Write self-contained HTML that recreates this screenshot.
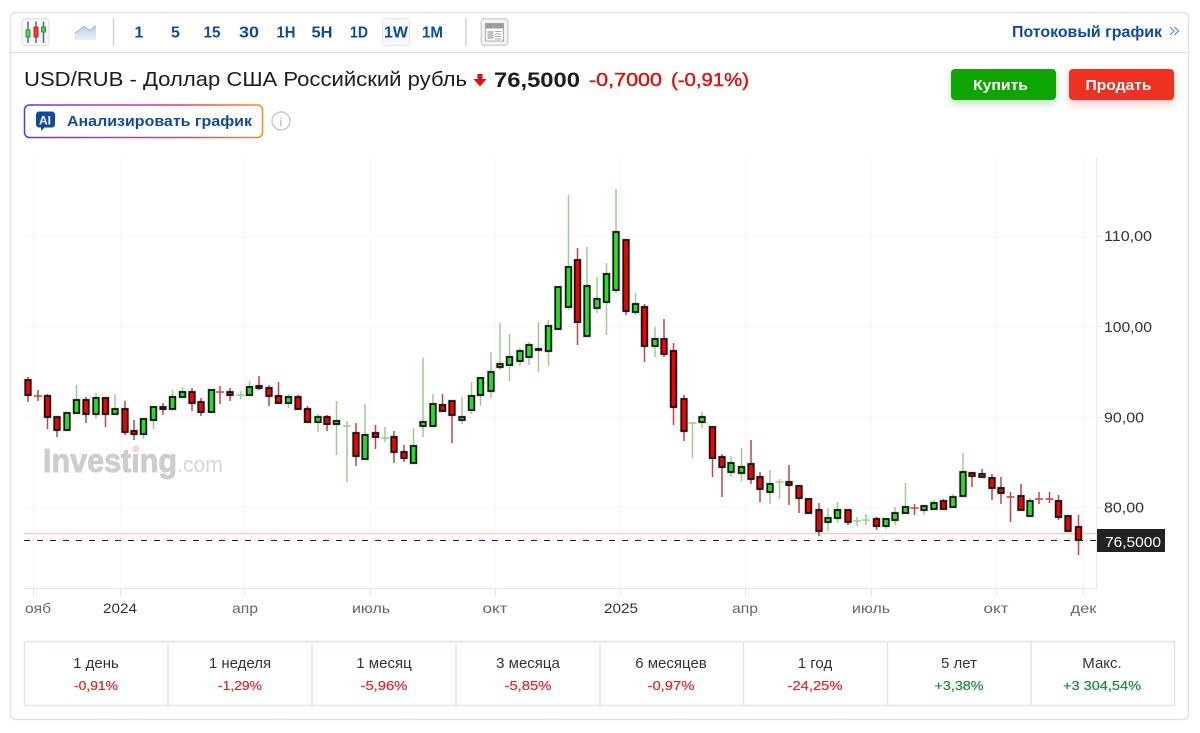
<!DOCTYPE html>
<html lang="ru"><head><meta charset="utf-8"><title>USD/RUB</title>
<style>
html,body{margin:0;padding:0;background:#fff;width:1200px;height:733px;overflow:hidden}
svg{display:block}
text{font-family:"Liberation Sans",sans-serif;}
.tb{font-size:16px;font-weight:700;fill:#124a98;text-anchor:middle}
.ax{font-size:14px;fill:#666;text-anchor:middle}
.yl{font-size:15px;fill:#333}
.lb{font-size:15px;fill:#333;text-anchor:middle}
.r{font-size:13px;fill:#e5262b;stroke:#e5262b;stroke-width:.2;text-anchor:middle}
.g{font-size:13px;fill:#1f8a3a;stroke:#1f8a3a;stroke-width:.2;text-anchor:middle}
</style></head><body>
<svg width="1200" height="733" viewBox="0 0 1200 733" xmlns="http://www.w3.org/2000/svg">
<defs>
<linearGradient id="ai" x1="0" x2="1" y1="0" y2="0"><stop offset="0" stop-color="#4a3df0"/><stop offset=".35" stop-color="#c52fc0"/><stop offset=".65" stop-color="#f8306a"/><stop offset="1" stop-color="#ff8a1c"/></linearGradient>
<linearGradient id="ar" x1="0" x2="0" y1="0" y2="1"><stop offset="0" stop-color="#bfd0e6"/><stop offset="1" stop-color="#e8eef6"/></linearGradient>
<filter id="s1" x="-20%" y="-40%" width="140%" height="200%"><feDropShadow dx="0" dy="4" stdDeviation="4" flood-color="#0ca605" flood-opacity=".28"/></filter>
<filter id="s2" x="-20%" y="-40%" width="140%" height="200%"><feDropShadow dx="0" dy="4" stdDeviation="4" flood-color="#ee3123" flood-opacity=".28"/></filter>
<path id="gb" d="M64.25 413h5.5V430h-5.5zM73.75 400h5.5V413h-5.5zM93.25 398h5.5V414h-5.5zM112.25 409h5.5V414h-5.5zM140.75 419h5.5V434h-5.5zM150.75 407h5.5V420h-5.5zM169.75 397h5.5V409h-5.5zM179.75 392h5.5V397h-5.5zM208.75 390h5.5V412h-5.5zM246.75 387h5.5V395h-5.5zM285.75 397h5.5V403h-5.5zM315.25 417h5.5V422h-5.5zM333.75 421h5.5V424h-5.5zM362.25 435h5.5V459h-5.5zM410.75 446h5.5V463h-5.5zM420.25 422h5.5V426h-5.5zM430.25 404h5.5V426h-5.5zM459.25 417h5.5V420h-5.5zM468.75 396h5.5V410h-5.5zM477.75 378h5.5V395h-5.5zM488.25 372h5.5V391h-5.5zM497.25 364h5.5V367h-5.5zM506.75 357h5.5V365h-5.5zM517.25 351h5.5V361h-5.5zM526.25 345h5.5V357h-5.5zM535.75 349h5.5V350h-5.5zM545.75 326h5.5V351h-5.5zM555.25 287h5.5V329h-5.5zM565.75 267h5.5V307h-5.5zM584.25 286h5.5V336h-5.5zM594.25 299h5.5V308h-5.5zM603.75 274h5.5V302h-5.5zM613.25 232h5.5V290h-5.5zM632.75 304h5.5V312h-5.5zM652.25 339h5.5V346h-5.5zM699.25 417h5.5V422h-5.5zM728.25 463h5.5V472h-5.5zM738.75 467h5.5V473h-5.5zM767.25 484h5.5V492h-5.5zM825.25 518h5.5V522h-5.5zM834.75 510h5.5V518h-5.5zM883.25 519h5.5V526h-5.5zM892.25 513h5.5V520h-5.5zM902.75 507h5.5V513h-5.5zM921.25 506h5.5V510h-5.5zM931.25 503h5.5V509h-5.5zM950.25 497h5.5V507h-5.5zM960.25 472h5.5V496h-5.5zM1027.25 501h5.5V516h-5.5z"/>
<path id="rb" d="M25.25 380h5.5V395h-5.5zM44.75 396h5.5V417h-5.5zM54.25 417h5.5V430h-5.5zM83.25 400h5.5V414h-5.5zM102.75 398h5.5V414h-5.5zM122.25 409h5.5V432h-5.5zM131.25 431h5.5V434h-5.5zM160.25 407h5.5V409h-5.5zM189.25 392h5.5V403h-5.5zM198.25 402h5.5V412h-5.5zM227.25 392h5.5V395h-5.5zM256.25 386h5.5V388h-5.5zM266.25 388h5.5V396h-5.5zM275.75 396h5.5V403h-5.5zM295.25 397h5.5V409h-5.5zM304.75 409h5.5V422h-5.5zM324.25 417h5.5V424h-5.5zM353.25 433h5.5V456h-5.5zM372.75 433h5.5V437h-5.5zM391.25 437h5.5V452h-5.5zM401.25 452h5.5V458h-5.5zM439.75 405h5.5V411h-5.5zM449.25 401h5.5V415h-5.5zM574.75 260h5.5V322h-5.5zM623.25 240h5.5V311h-5.5zM641.75 307h5.5V346h-5.5zM661.25 339h5.5V354h-5.5zM670.75 351h5.5V407h-5.5zM681.25 399h5.5V431h-5.5zM709.75 427h5.5V458h-5.5zM719.25 457h5.5V467h-5.5zM748.25 464h5.5V479h-5.5zM757.25 477h5.5V489h-5.5zM786.25 482h5.5V485h-5.5zM796.25 486h5.5V498h-5.5zM805.75 499h5.5V513h-5.5zM816.25 510h5.5V531h-5.5zM845.25 510h5.5V522h-5.5zM873.75 519h5.5V526h-5.5zM940.75 501h5.5V509h-5.5zM969.25 473h5.5V476h-5.5zM979.25 474h5.5V477h-5.5zM989.25 478h5.5V488h-5.5zM998.25 488h5.5V493h-5.5zM1018.25 496h5.5V510h-5.5zM1055.75 501h5.5V517h-5.5zM1065.25 516h5.5V531h-5.5zM1075.75 527h5.5V540h-5.5z"/>
</defs>

<!-- card -->
<rect x="10.5" y="12.5" width="1178" height="707" rx="5" fill="#fff" stroke="#e2e4e8" stroke-width="1.6"/>
<path d="M11 52.5H1188" stroke="#dfe1e5" stroke-width="1.4"/>

<!-- toolbar -->
<rect x="22" y="18.5" width="27" height="27" rx="3" fill="#f6f7f8" stroke="#dfe1e4" stroke-width="1.2"/>
<path d="M28 21.5V43M36 21.5V43M43.5 21.5V43" stroke="#666" stroke-width="1.5"/>
<rect x="26" y="30" width="4" height="7" fill="#4bd04b" stroke="#3a8a3a"/>
<rect x="34" y="27" width="4" height="10" fill="#f33" stroke="#a33"/>
<rect x="41.5" y="27" width="4" height="5" fill="#4bd04b" stroke="#3a8a3a"/>
<path d="M75 33L84 26.5L90 30.5L96 25.5V40H75Z" fill="url(#ar)"/>
<path d="M75 33L84 26.5L90 30.5L96 25.5" fill="none" stroke="#9db4d4" stroke-width="1"/>
<path d="M113.5 18V46M466 18V46" stroke="#c9ccd0" stroke-width="1.3"/>
<rect x="382.5" y="18.5" width="27" height="27" rx="3" fill="#f6f7f8" stroke="#e3e5e8" stroke-width="1.2"/>
<text class="tb" x="139" y="37.5">1</text>
<text class="tb" x="175.5" y="37.5">5</text>
<text class="tb" x="212" y="37.5" textLength="17" lengthAdjust="spacingAndGlyphs">15</text>
<text class="tb" x="249" y="37.5" textLength="20" lengthAdjust="spacingAndGlyphs">30</text>
<text class="tb" x="286" y="37.5" textLength="19" lengthAdjust="spacingAndGlyphs">1H</text>
<text class="tb" x="322" y="37.5" textLength="21" lengthAdjust="spacingAndGlyphs">5H</text>
<text class="tb" x="359" y="37.5" textLength="18" lengthAdjust="spacingAndGlyphs">1D</text>
<text class="tb" x="396" y="37.5" textLength="24" lengthAdjust="spacingAndGlyphs">1W</text>
<text class="tb" x="432.5" y="37.5" textLength="21" lengthAdjust="spacingAndGlyphs">1M</text>
<rect x="481.2" y="18.7" width="26.6" height="26.6" rx="3" fill="#f2f3f4" stroke="#cfd1d4" stroke-width="1.4"/>
<rect x="485.5" y="23.5" width="18" height="17.5" fill="#fff" stroke="#9a9c9f" stroke-width=".8"/>
<rect x="485.5" y="23.5" width="18" height="5" fill="#9a9c9f"/>
<rect x="487.5" y="31" width="6" height="8" fill="#c0c2c4"/>
<path d="M495 31.5h6.5M495 34h6.5M495 36.5h6.5M495 39h6.5" stroke="#a8aaad"/>
<text x="1012" y="37" font-size="15.5" font-weight="700" fill="#124a98" textLength="150" lengthAdjust="spacingAndGlyphs">Потоковый график</text>
<path d="M1170 27l4 4-4 4M1174.5 27l4 4-4 4" fill="none" stroke="#5a80b8" stroke-width="1.1"/>

<!-- title -->
<text x="24" y="86" font-size="20" fill="#1c1c1c" textLength="443" lengthAdjust="spacingAndGlyphs">USD/RUB - Доллар США Российский рубль</text>
<path d="M477.5 74h5v5h4l-6.5 7.5-6.5-7.5h4z" fill="#e01010"/>
<text x="494" y="87" font-size="21.5" font-weight="700" fill="#1c1c1c" textLength="86" lengthAdjust="spacingAndGlyphs">76,5000</text>
<text x="589" y="86" font-size="18.5" fill="#e01010" stroke="#e01010" stroke-width=".4" textLength="73" lengthAdjust="spacingAndGlyphs">-0,7000</text>
<text x="671" y="86" font-size="18.5" fill="#e01010" stroke="#e01010" stroke-width=".4" textLength="78" lengthAdjust="spacingAndGlyphs">(-0,91%)</text>

<!-- buttons -->
<rect x="951" y="69" width="105" height="31" rx="4" fill="#0ca605" filter="url(#s1)"/>
<rect x="1069" y="69" width="105" height="31" rx="4" fill="#ee3123" filter="url(#s2)"/>
<text x="1000.5" y="90" font-size="15" font-weight="700" fill="#fff" text-anchor="middle" textLength="55" lengthAdjust="spacingAndGlyphs">Купить</text>
<text x="1118.5" y="90" font-size="15" font-weight="700" fill="#fff" text-anchor="middle" textLength="66" lengthAdjust="spacingAndGlyphs">Продать</text>

<!-- AI button -->
<rect x="24.5" y="105" width="238" height="32.5" rx="5" fill="#fff" stroke="url(#ai)" stroke-width="1.5"/>
<path d="M39 111.5h13a3 3 0 0 1 3 3v10a3 3 0 0 1-3 3h-7.5l-3.5 3.5v-3.5h-2a3 3 0 0 1-3-3v-10a3 3 0 0 1 3-3z" fill="#124a98"/>
<text x="39" y="124.5" font-size="12" font-weight="700" fill="#fff">AI</text>
<text x="67" y="126" font-size="14.5" font-weight="700" fill="#124a98" textLength="185" lengthAdjust="spacingAndGlyphs">Анализировать график</text>
<circle cx="281" cy="121" r="9" fill="#fff" stroke="#c4c6c9" stroke-width="1.4"/>
<text x="281" y="126" font-size="12" fill="#aaa" text-anchor="middle">i</text>

<!-- grid -->
<path d="M24 236.5H1096M24 326.5H1096M24 417.5H1096M24 507.5H1096M33.5 157V588M120.5 157V588M244.5 157V588M370.5 157V588M495.5 157V588M620.5 157V588M745.5 157V588M871.5 157V588M996.5 157V588M1083.5 157V588" stroke="#f6f7f8" stroke-width="1"/>
<path d="M1096.5 157V588.5H24" fill="none" stroke="#e8eaef" stroke-width="1.2"/>
<path d="M33.5 589V596M120.5 589V596M244.5 589V596M370.5 589V596M495.5 589V596M620.5 589V596M745.5 589V596M871.5 589V596M996.5 589V596M1083.5 589V596M1097 236.5H1102M1097 326.5H1102M1097 417.5H1102M1097 507.5H1102" stroke="#e4e7ec" stroke-width="1.2"/>
<path d="M24 533.5H1096" stroke="#f8caca" stroke-width="1.4"/>

<!-- watermark -->
<text x="43" y="472" font-size="33" font-weight="700" fill="#cdcdcd" stroke="#cdcdcd" stroke-width=".9" textLength="134" lengthAdjust="spacingAndGlyphs">Investing</text>
<text x="177" y="472" font-size="22" fill="#d6d6d6" textLength="46" lengthAdjust="spacingAndGlyphs">.com</text>
<rect x="133" y="446" width="6" height="5" fill="#f6dcbc"/>

<!-- green wicks -->
<path fill="none" stroke="#9fcb90" stroke-width="1.5" d="M67 413V431M76.5 385V413M96 393V419M115 394V414M143.5 419V439M153.5 406V429M172.5 390V409M182.5 387V397M211.5 390V412M249.5 381V395M288.5 394V408M318 414V432M336.5 401V455M365 404V459M413.5 428V463M423 358V437M433 394V426M462 397V424M471.5 382V414M480.5 378V406M491 352V398M500 323V370M509.5 334V381M520 348V366M529 342V365M538.5 322V372M548.5 320V366M558 287V329M568.5 195V310M587 247V336M597 277V313M606.5 263V335M616 189V293M635.5 293V315M655 327V357M702 412V428M731 456V477M741.5 448V481M770 470V504M828 508V531M837.5 502V523M886 519V529M895 507V525M905.5 483V513M924 505V515M934 500V509M953 494V507M963 453V496M1030 498V516M240.5 391V399M236.5 395H244.5M347 421V482M343 426H351M385 427V442M381 438H389M692.5 422V458M688.5 423H696.5M779.5 479V499M775.5 482H783.5M857 517V526M853 521H861M866 514V525M862 520H870"/>
<!-- red wicks -->
<path fill="none" stroke="#c2434a" stroke-width="1.5" d="M28 377V402M47.5 394V429M57 417V437M86 397V423M105.5 397V427M125 401V435M134 420V440M163 403V415M192 388V411M201 398V416M230 388V401M259 376V390M269 385V406M278.5 382V403M298 395V409M307.5 406V422M327 415V431M356 423V466M375.5 425V449M394 431V463M404 445V462M442.5 394V411M452 401V443M577.5 248V345M626 240V315M644.5 304V362M664 319V357M673.5 343V425M684 395V441M712.5 427V477M722 454V497M751 440V484M760 472V502M789 465V505M799 485V513M808.5 498V513M819 503V536M848 510V525M876.5 517V530M943.5 499V509M972 472V487M982 469V477M992 474V500M1001 477V504M1021 484V510M1058.5 495V520M1068 515V531M1078.5 515V555M38 390V401M34 396H42M220 386V404M216 392H224M914.5 504V515M910.5 508H918.5M1010.5 492V522M1006.5 497H1014.5M1039 492V504M1035 499H1043M1049.5 492V503M1045.5 499H1053.5"/>

<!-- candle halos -->
<use href="#gb" fill="none" stroke="#000" stroke-opacity=".13" stroke-width="3.2"/>
<use href="#rb" fill="none" stroke="#000" stroke-opacity=".13" stroke-width="3.2"/>
<!-- bodies -->
<use href="#gb" fill="#22e022" stroke="#111" stroke-width="1.7"/>
<use href="#rb" fill="#f40000" stroke="#111" stroke-width="1.7"/>

<!-- dashed price line -->
<path d="M24 540.5H1096" stroke="#222" stroke-width="1" stroke-dasharray="6 7"/>
<rect x="1097" y="529" width="68" height="23" fill="#222"/>
<text x="1105" y="547" font-size="15" fill="#fff" textLength="56" lengthAdjust="spacingAndGlyphs">76,5000</text>

<!-- y axis -->
<text class="yl" x="1104" y="241" textLength="48" lengthAdjust="spacingAndGlyphs">110,00</text>
<text class="yl" x="1104" y="332" textLength="48" lengthAdjust="spacingAndGlyphs">100,00</text>
<text class="yl" x="1104" y="422.5" textLength="40" lengthAdjust="spacingAndGlyphs">90,00</text>
<text class="yl" x="1104" y="512.5" textLength="40" lengthAdjust="spacingAndGlyphs">80,00</text>

<!-- x axis -->
<text class="ax" x="38" y="613" textLength="26" lengthAdjust="spacingAndGlyphs">ояб</text>
<text class="ax" x="120" y="613" style="fill:#333" textLength="34" lengthAdjust="spacingAndGlyphs">2024</text>
<text class="ax" x="245" y="613" textLength="26" lengthAdjust="spacingAndGlyphs">апр</text>
<text class="ax" x="371" y="613" textLength="38" lengthAdjust="spacingAndGlyphs">июль</text>
<text class="ax" x="495" y="613" textLength="25" lengthAdjust="spacingAndGlyphs">окт</text>
<text class="ax" x="621" y="613" style="fill:#333" textLength="34" lengthAdjust="spacingAndGlyphs">2025</text>
<text class="ax" x="745" y="613" textLength="26" lengthAdjust="spacingAndGlyphs">апр</text>
<text class="ax" x="871" y="613" textLength="38" lengthAdjust="spacingAndGlyphs">июль</text>
<text class="ax" x="996" y="613" textLength="25" lengthAdjust="spacingAndGlyphs">окт</text>
<text class="ax" x="1083.5" y="613" textLength="26" lengthAdjust="spacingAndGlyphs">дек</text>

<!-- table -->
<rect x="24.5" y="641.5" width="1150" height="64" fill="#fff" stroke="#dfe2e7" stroke-width="1.4"/>
<path d="M168 641V705M312 641V705M456 641V705M600 641V705M743.5 641V705M887.5 641V705M1031 641V705" stroke="#dfe2e7" stroke-width="1.4"/>
<text class="lb" x="96" y="668">1 день</text><text class="r" x="96" y="690" textLength="44" lengthAdjust="spacingAndGlyphs">-0,91%</text>
<text class="lb" x="240" y="668">1 неделя</text><text class="r" x="240" y="690" textLength="44" lengthAdjust="spacingAndGlyphs">-1,29%</text>
<text class="lb" x="384" y="668">1 месяц</text><text class="r" x="384" y="690" textLength="47" lengthAdjust="spacingAndGlyphs">-5,96%</text>
<text class="lb" x="528" y="668">3 месяца</text><text class="r" x="528" y="690" textLength="47" lengthAdjust="spacingAndGlyphs">-5,85%</text>
<text class="lb" x="671" y="668">6 месяцев</text><text class="r" x="671" y="690" textLength="47" lengthAdjust="spacingAndGlyphs">-0,97%</text>
<text class="lb" x="815" y="668">1 год</text><text class="r" x="815" y="690" textLength="55" lengthAdjust="spacingAndGlyphs">-24,25%</text>
<text class="lb" x="959" y="668">5 лет</text><text class="g" x="959" y="690" textLength="49" lengthAdjust="spacingAndGlyphs">+3,38%</text>
<text class="lb" x="1102" y="668">Макс.</text><text class="g" x="1102" y="690" textLength="78" lengthAdjust="spacingAndGlyphs">+3 304,54%</text>
</svg>
</body></html>
